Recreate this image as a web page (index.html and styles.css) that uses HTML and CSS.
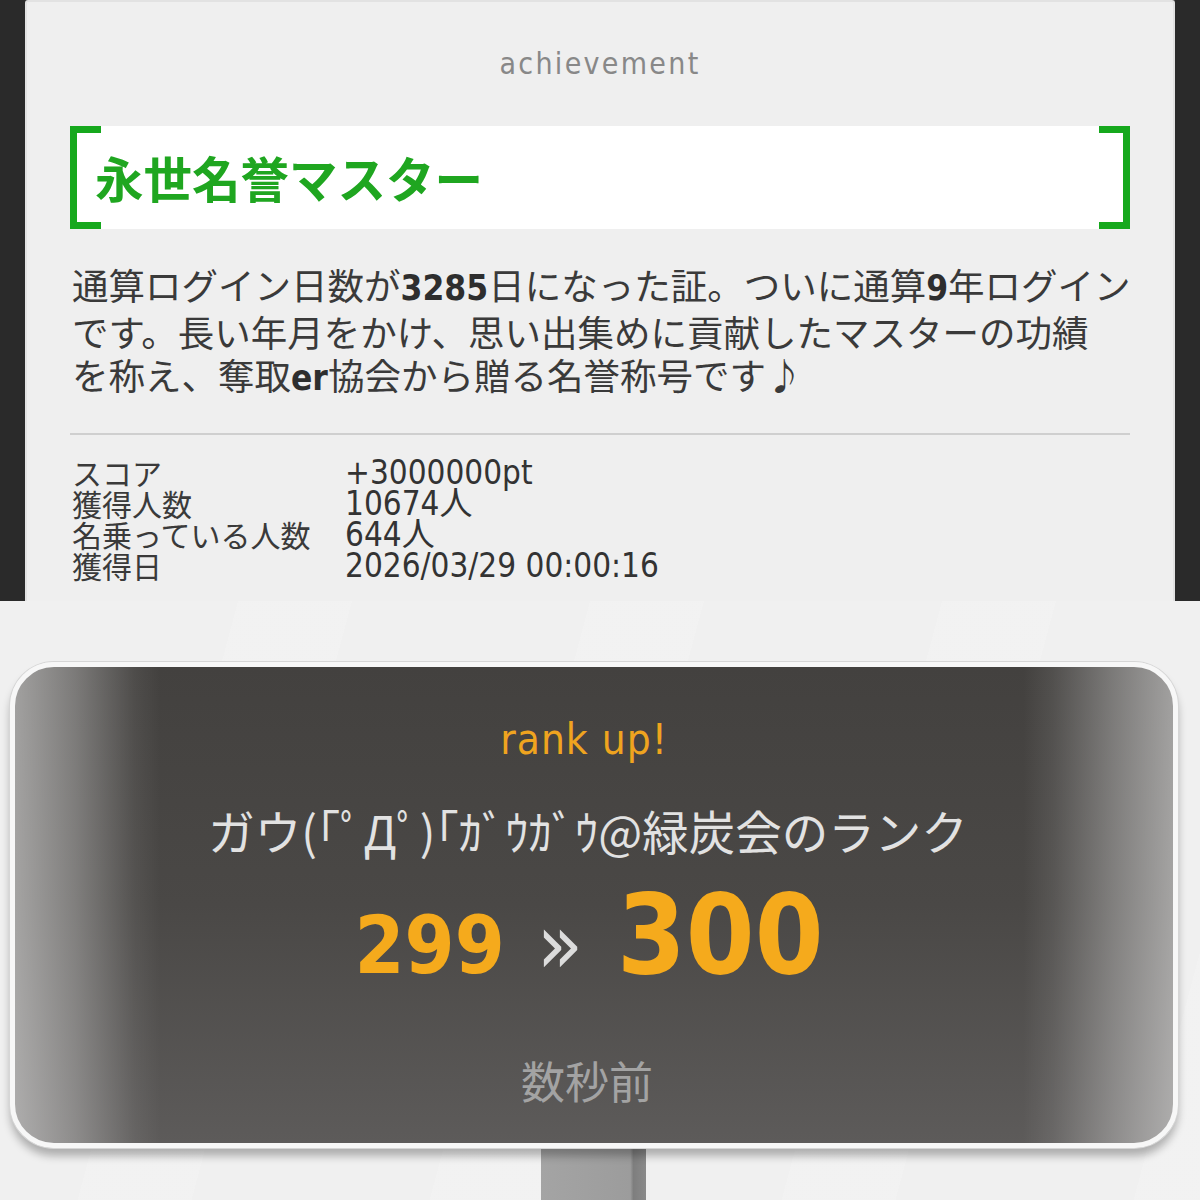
FILE: index.html
```html
<!DOCTYPE html>
<html lang="ja">
<head>
<meta charset="utf-8">
<link rel="stylesheet" href="styles.css">
</head>
<body>
<div class="top">
  <div class="card">
    <div class="kicker">achievement</div>
    <div class="title-box">
      <span class="br br-l"></span>
      <h1 class="title">永世名誉マスター</h1>
      <span class="br br-r"></span>
    </div>
    <p class="desc">通算ログイン日数が<b>3285</b>日になった証。ついに通算<b>9</b>年ログイン<br>です。長い年月をかけ、思い出集めに貢献したマスターの功績<br>を称え、奪取<b>er</b>協会から贈る名誉称号です♪</p>
    <hr class="divider">
    <dl class="stats">
      <dt>スコア</dt><dd>+3000000pt</dd>
      <dt>獲得人数</dt><dd>10674人</dd>
      <dt>名乗っている人数</dt><dd>644人</dd>
      <dt>獲得日</dt><dd>2026/03/29 00:00:16</dd>
    </dl>
  </div>
</div>
<div class="bottom">
  <div class="board">
    <div class="rankup">rank up!</div>
    <div class="name">ガウ(｢ﾟДﾟ)｢ｶﾞｳｶﾞｳ@緑炭会のランク</div>
    <div class="ranks"><span class="old">299</span><span class="arrow">»</span><span class="new">300</span></div>
    <div class="ago">数秒前</div>
  </div>
  <div class="pole"></div>
</div>
</body>
</html>
```
FILE: styles.css
```css
html, body {
  margin: 0;
  padding: 0;
}
body {
  width: 1200px;
  height: 1200px;
  overflow: hidden;
  font-family: "Noto Sans CJK JP", sans-serif;
}
.top {
  height: 601px;
  background: #2a2a2a;
  padding: 0 25px;
  box-sizing: border-box;
}
.card {
  height: 100%;
  box-sizing: border-box;
  background: #efefef;
  border: 2px solid #e2e2e2;
  border-bottom: none;
  border-radius: 3px 3px 0 0;
  padding: 0 43px;
  display: flex;
  flex-direction: column;
}
.kicker {
  margin-top: 42px;
  text-align: center;
  font-family: "DejaVu Sans Condensed", "DejaVu Sans", sans-serif;
  font-size: 30px;
  line-height: 40px;
  letter-spacing: 2.3px;
  color: #888;
}
.title-box {
  position: relative;
  margin-top: 42px;
  height: 103px;
  background: #fff;
  display: flex;
  align-items: center;
  padding-left: 25px;
}
.br {
  position: absolute;
  top: 0;
  bottom: 0;
  width: 24px;
  border: 7px solid #16a81d;
}
.br-l { left: 0; border-right: none; }
.br-r { right: 0; border-left: none; }
.title {
  margin: 0;
  font-size: 48.5px;
  font-weight: 700;
  color: #1fa620;
  line-height: 1;
  padding-top: 0;
}
.desc {
  margin: 34px -12px 0 0;
  font-size: 36.5px;
  line-height: 43px;
  color: #3a3a3a;
  padding-left: 2px;
  white-space: nowrap;
}
.desc b {
  font-family: "DejaVu Sans Condensed", "DejaVu Sans", sans-serif;
  font-size: 35px;
  font-weight: 700;
  color: #2e2e2e;
}
.divider {
  margin: 33px 0 0;
  border: none;
  height: 2px;
  background: #cfcfcf;
}
.stats {
  margin: 22px 0 0;
  display: grid;
  grid-template-columns: 273px auto;
  font-size: 30px;
  line-height: 31px;
  color: #3a3a3a;
  padding-left: 2px;
}
.stats dt, .stats dd {
  margin: 0;
}
.stats dd {
  font-family: "DejaVu Sans Condensed", "DejaVu Sans", "Noto Sans CJK JP", sans-serif;
  font-size: 33px;
  color: #333;
}
.bottom {
  height: 599px;
  box-sizing: border-box;
  padding: 61px 22px 0 10px;
  background:
    repeating-linear-gradient(105deg, rgba(255,255,255,0) 0 230px, rgba(255,255,255,0.12) 230px 340px),
    #f0f0f0;
  display: flex;
  flex-direction: column;
}
.board {
  height: 486px;
  box-sizing: border-box;
  border: 5px solid #f7f7f7;
  border-radius: 44px;
  box-shadow: 0 0 0 1px #d6d6d6, 0 8px 8px rgba(0,0,0,0.28);
  background:
    linear-gradient(to right, rgba(255,255,255,0.5) 0, rgba(255,255,255,0.3) 60px, rgba(255,255,255,0.06) 120px, rgba(255,255,255,0) 145px, rgba(255,255,255,0) calc(100% - 150px), rgba(255,255,255,0.08) calc(100% - 120px), rgba(255,255,255,0.3) calc(100% - 60px), rgba(255,255,255,0.5) 100%),
    linear-gradient(to bottom, #43413f 0, #4a4846 50%, #5d5b5a 100%);
  display: flex;
  flex-direction: column;
  align-items: center;
  color: #ddd;
  position: relative;
  z-index: 1;
}
.rankup {
  margin-top: 47px;
  font-family: "DejaVu Sans Condensed", "DejaVu Sans", sans-serif;
  font-size: 42px;
  line-height: 52px;
  letter-spacing: 1px;
  color: #efa41f;
  margin-left: -20px;
}
.name {
  margin-top: 36px;
  font-size: 46.5px;
  line-height: 56px;
  color: #e2e2e2;
  margin-left: -12px;
}
.ranks {
  margin-top: 22px;
  display: flex;
  align-items: baseline;
  font-family: "DejaVu Sans Condensed", "DejaVu Sans", sans-serif;
  font-weight: 700;
  color: #f5aa1c;
  line-height: 1;
  margin-left: -10px;
}
.old {
  font-size: 80px;
}
.arrow {
  font-size: 84px;
  font-weight: 400;
  color: #dcdcdc;
  margin: 0 34px 0 32px;
}
.new {
  font-size: 110px;
}
.ago {
  margin-top: 60px;
  font-size: 44px;
  line-height: 60px;
  color: #a3a3a3;
  margin-left: -14px;
}
.pole {
  align-self: flex-start;
  margin-left: 531px;
  width: 105px;
  flex: 1;
  background: linear-gradient(to right, #a4a4a4 0, #9c9c9c 85%, #7e7e7e 88%, #8a8a8a 100%);
}
```
